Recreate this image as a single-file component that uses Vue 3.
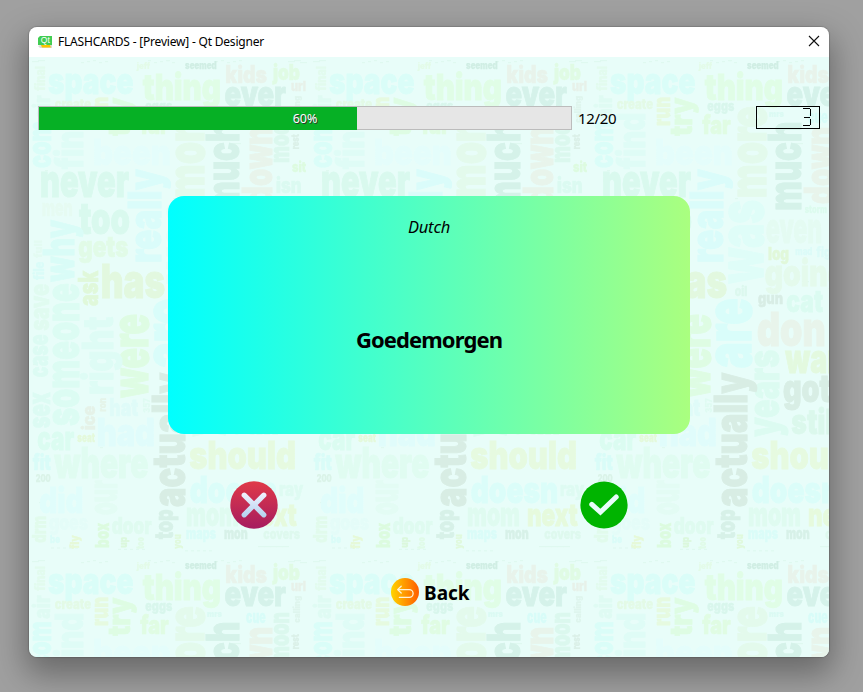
<script setup>
const TILE_W = 281
const TILE_H = 500

// [text, start x, end x, baseline y, font size, colour]
const across = [
  ['space', 19, 104.5, 36.5, 36, '#dafdf8'],
  ['thing', 113.7, 192, 43, 36, '#e0fde6'],
  ['seemed', 156, 187.5, 12, 10, '#d0eee4'],
  ['jeff', 107.7, 121, 12, 8, '#e3fbe8'],
  ['kids', 196.3, 238, 25.7, 24, '#e8f3eb'],
  ['ever', 195.5, 257, 49, 35, '#d5f2ea'],
  ['job', 244, 271, 23, 22, '#e0fbe4'],
  ['url', 262, 277, 34, 13, '#e7f1e9'],
  ['create', 25.7, 62, 52.3, 13, '#e3fae6'],
  ['eggs', 116.3, 143.3, 54, 13, '#d8f6ec'],
  ['mrs', 178, 193, 60, 9, '#dbfaf3'],
  ['cue', 217, 236.7, 65.7, 17, '#d8fcf8'],
  ['far', 111.3, 139.7, 77.3, 26, '#e0fce3'],
  ['been', 64, 142, 108, 35, '#e4fdfb'],
  ['sit', 263, 277, 114.7, 14, '#ddfbe0'],
  ['isn', 247, 272.7, 136.3, 21, '#dbfaf1'],
  ['never', 11, 100, 139.7, 45, '#d9f9ee'],
  ['storm', 213.7, 236, 156.3, 10, '#dcfbee'],
  ['men', 12.7, 43.7, 159, 24, '#e6fbf2'],
  ['too', 50, 101, 177.3, 44, '#d9f9ee'],
  ['even', 175, 231, 185.7, 42, '#e4fbf2'],
  ['gets', 49.3, 99.3, 200.3, 29, '#e1fbe7'],
  ['mad', 204.3, 221.3, 198.3, 10, '#dcfbf8'],
  ['fig', 225.3, 240, 200, 13, '#dcfbf8'],
  ['log', 177, 198, 203, 17, '#e1f8da'],
  ['going', 173.7, 255, 229, 36, '#e4faec'],
  ['oil', 143.7, 156.3, 239, 13, '#dcf8ee'],
  ['has', 71.7, 136, 240.7, 47, '#e2f8df'],
  ['gun', 167, 192, 247, 16, '#d8ede5'],
  ['cat', 195.3, 232, 254.7, 30, '#dbfbf1'],
  ['don', 166, 234.7, 288.7, 47, '#e8f4eb'],
  ['want', 194.3, 266, 316.3, 41, '#e3f9df'],
  ['got', 192, 240, 345.3, 38, '#d8eee5'],
  ['hat', 80.3, 109.3, 359, 24, '#dffbf8'],
  ['still', 200.3, 250, 377, 34, '#dbf8ec'],
  ['seat', 48.3, 66, 385, 12, '#e4f9db'],
  ['had', 67.7, 126, 389, 38, '#e0fcfb'],
  ['car', 8.3, 45.3, 393, 33, '#dbfcf1'],
  ['should', 160.3, 267, 411.7, 38, '#e6fae0'],
  ['fit', 3.7, 22, 413, 22, '#d9fcf8'],
  ['where', 25.3, 119.3, 420.7, 42, '#e0fcf1'],
  ['200', 6.7, 21.7, 425, 10, '#daf3e8'],
  ['ray', 250, 274.3, 439.3, 19, '#defbf2'],
  ['doesn', 160.7, 248.3, 446, 37, '#dbfdf9'],
  ['did', 10.3, 54.3, 455.7, 35, '#e0fdfb'],
  ['goes', 20, 59, 473.3, 22, '#e4fcf8'],
  ['mom', 157, 210, 469, 33, '#dffbf0'],
  ['next', 217, 267.7, 469, 31, '#e6fadd'],
  ['door', 82.7, 122.7, 477.3, 23, '#dffbf0'],
  ['maps', 157, 187, 481.7, 15, '#dafcf8'],
  ['mon', 195, 218.7, 481.7, 16, '#d7f1e8'],
  ['covers', 234.3, 271, 481.7, 14, '#def9ee'],
  ['be', 21, 31, 485.7, 11, '#dafcf8'],
]

// [text, baseline x, top y, bottom y, font size, colour]
const upward = [
  ['final', 16, 9, 33.7, 13, '#e2fbee'],
  ['air', 20.5, 38.3, 61.7, 24, '#dffbf3'],
  ['com', 22, 64, 111, 33, '#dafdf8'],
  ['run', 79.3, 39.7, 69, 24, '#e6fae0'],
  ['try', 101, 40.7, 79, 31, '#defce3'],
  ['find', 54.3, 55.7, 112.3, 38, '#dffcf6'],
  ['more', 175.3, 49, 141, 51, '#e3faec'],
  ['much', 209.7, 64.7, 153.7, 45, '#d5f2e9'],
  ['down', 242.7, 69.7, 147, 41, '#e8f4eb'],
  ['moon', 260, 55, 106, 27, '#dbf8ee'],
  ['calling', 271, 39, 65.7, 9, '#def5ed'],
  ['rest', 270, 77.3, 92.3, 11, '#dbf0e8'],
  ['really', 131.7, 112, 206, 45, '#dafcfa'],
  ['why', 45, 163, 224.7, 42, '#d9fcf7'],
  ['was', 171.5, 143, 226.3, 62, '#dffdf8'],
  ['full', 13, 183, 201, 11, '#e3fbf2'],
  ['file', 15, 204.7, 223, 14, '#dafcf8'],
  ['save', 20.3, 227, 273.7, 27, '#e0fbf0'],
  ['ask', 68.7, 213.7, 249, 27, '#e0f8da'],
  ['someone', 49.7, 226.3, 369, 47, '#dcfcf3'],
  ['are', 159.7, 241.3, 311.3, 63, '#d9fdfa'],
  ['case', 19, 277.3, 320.3, 27, '#dcfbf3'],
  ['were', 118.7, 257, 340.7, 50, '#defce3'],
  ['right', 84, 259.7, 338, 42, '#defcf5'],
  ['years', 188, 293, 379.7, 44, '#dcfbf1'],
  ['ice', 66, 348.7, 373, 18, '#e5f2e8'],
  ['ron', 77, 340.7, 354.7, 11, '#e5f4e9'],
  ['357', 121, 341.3, 355.7, 9, '#dffbf2'],
  ['sex', 21, 335.3, 371.3, 30, '#dcfbf3'],
  ['actually', 155.5, 315.7, 450, 46, '#d8ede4'],
  ['top', 143.7, 452.3, 482.3, 26, '#d7f1e8'],
  ['our', 87.7, 423, 458, 40, '#e3fcf4'],
  ['drm', 16.7, 459, 485.7, 19, '#e1fbec'],
  ['box', 80, 465.7, 491, 19, '#dcfbdf'],
  ['fly', 50, 478.3, 491.7, 12, '#e6f9d8'],
  ['up', 98, 480, 490.7, 11, '#dbf8dc'],
  ['too', 115, 480, 491.7, 11, '#e0fbe8'],
  ['you', 152, 477.3, 491.7, 11, '#e0f9dc'],
]

const specks = Array.from({ length: 54 }, (_, i) => ({
  x: (i * 67 + 9) % 274,
  y: i < 20 ? 3 + (i % 3) : i < 40 ? 489 + (i % 4) * 1.4 : (i * 83) % 470,
  w: i % 4 === 0 ? 7 : 3,
}))

const heft = (size) => size * 0.025

const total = 20
const current = 12
const percent = (current / total) * 100
</script>

<template>
  <div class="desktop">
    <main class="window">
      <header class="titlebar">
        <svg class="app-icon" width="14" height="12" viewBox="0 0 14 12">
          <path d="M2 0H14V9H0V2Z" fill="#41cd52" />
          <path d="M0 10L2 9H14V12H2Z" fill="#dcdcd4" />
          <path d="M3 9H12L13 11.5H4Z" fill="#f8c500" />
          <text x="2.8" y="7.4" class="app-icon-text">Qt</text>
        </svg>
        <span class="title">FLASHCARDS - [Preview] - Qt Designer</span>
        <svg class="close" width="12" height="12" viewBox="0 0 12 12">
          <path d="M1 1L11 11M11 1L1 11" />
        </svg>
      </header>

      <section class="client">
        <svg class="wallpaper" width="800" height="600" aria-hidden="true">
          <defs>
            <pattern id="words" :width="TILE_W" :height="TILE_H" patternUnits="userSpaceOnUse">
              <rect v-for="(s, i) in specks" :key="'s' + i" :x="s.x" :y="s.y" :width="s.w" height="1.2" fill="#dff9f0" />
              <text
                v-for="([t, x0, x1, y, size, c], i) in across"
                :key="'a' + i"
                :x="x0"
                :y="y"
                :font-size="size"
                :fill="c"
                :stroke="c"
                :stroke-width="heft(size)"
                :textLength="x1 - x0"
                lengthAdjust="spacingAndGlyphs"
              >{{ t }}</text>
              <text
                v-for="([t, x, y0, y1, size, c], i) in upward"
                :key="'u' + i"
                :transform="`translate(${x} ${y1}) rotate(-90)`"
                :font-size="size"
                :fill="c"
                :stroke="c"
                :stroke-width="heft(size)"
                :textLength="y1 - y0"
                lengthAdjust="spacingAndGlyphs"
              >{{ t }}</text>
            </pattern>
          </defs>
          <rect width="800" height="600" fill="url(#words)" />
        </svg>

        <div class="content">
          <div class="status">
            <div class="progress">
              <div class="fill" :style="{ width: `calc(${percent}% - 1px)` }"></div>
              <span class="percent">{{ percent }}%</span>
            </div>
            <span class="count">{{ current }}/{{ total }}</span>
            <div class="lcd">
              <svg width="9" height="18" viewBox="0 0 9 18">
                <path d="M0 .5H7M1 9.5H7M0 17.5H7M7.5 1V8M7.5 11V17" />
              </svg>
            </div>
          </div>

          <article class="card">
            <span class="language">Dutch</span>
            <strong class="word">Goedemorgen</strong>
          </article>

          <div class="answers">
            <button class="round" aria-label="Wrong">
              <svg width="48" height="48" viewBox="0 0 48 48">
                <defs>
                  <linearGradient id="red" x1="0" y1="0" x2="0" y2="1">
                    <stop offset="0" stop-color="#e03a48" />
                    <stop offset="1" stop-color="#a61c60" />
                  </linearGradient>
                  <linearGradient id="ice" gradientUnits="userSpaceOnUse" x1="0" y1="12" x2="0" y2="36">
                    <stop offset="0" stop-color="#f0f2fc" />
                    <stop offset="1" stop-color="#b4d2f0" />
                  </linearGradient>
                </defs>
                <circle cx="24" cy="24" r="23.7" fill="url(#red)" />
                <path d="M14.2 14.2L33.8 33.8M33.8 14.2L14.2 33.8" stroke="url(#ice)" stroke-width="5.2" stroke-linecap="round" />
              </svg>
            </button>
            <button class="round" aria-label="Right">
              <svg width="48" height="48" viewBox="0 0 48 48">
                <circle cx="24" cy="24" r="23.6" fill="#00b400" />
                <path d="M11.8 23.4L20.4 31.2L36.2 16" fill="none" stroke="#e8fdf9" stroke-width="5" stroke-linecap="round" stroke-linejoin="miter" />
              </svg>
            </button>
          </div>

          <button class="back">
            <svg width="28" height="28" viewBox="0 0 28 28">
              <defs>
                <linearGradient id="orange" x1="0" y1="0" x2="1" y2="0">
                  <stop offset="0" stop-color="#ffd400" />
                  <stop offset="1" stop-color="#ff5c00" />
                </linearGradient>
              </defs>
              <circle cx="14" cy="14" r="14" fill="url(#orange)" />
              <path d="M10.2 8.2L6.6 11.6L10.2 15M6.8 11.6H18.2A3.9 3.9 0 0 1 18.2 19.4H8.4" fill="none" stroke="#fff3d8" stroke-width="1.3" stroke-linecap="round" stroke-linejoin="round" />
            </svg>
            <span class="back-label">Back</span>
          </button>
        </div>
      </section>
    </main>
  </div>
</template>

<style>
body {
  background: #a0a0a0;
}
</style>

<style scoped>
.desktop {
  box-sizing: border-box;
  width: 863px;
  height: 692px;
  padding: 27px 34px 35px 29px;
  overflow: hidden;
  background: #a0a0a0;
  font-family: "Noto Sans", "Open Sans", sans-serif;
  color: #000;
}
.window {
  width: 800px;
  height: 630px;
  border-radius: 8px;
  box-shadow: 0 0 1px 1px rgba(0, 0, 0, 0.14), 0 14px 32px 4px rgba(0, 0, 0, 0.34);
}
.titlebar {
  display: flex;
  align-items: center;
  box-sizing: border-box;
  height: 30px;
  padding: 0 9px;
  border-radius: 8px 8px 0 0;
  background: #fff;
}
.app-icon-text {
  font: 400 8.5px "Liberation Sans", sans-serif;
  fill: #fff;
}
.title {
  margin-left: 6px;
  font-size: 12px;
  line-height: 30px;
  letter-spacing: -0.2px;
  white-space: nowrap;
}
.close {
  margin: -2px 0 0 auto;
  stroke: #111;
  stroke-width: 1.1;
}
.client {
  display: grid;
  height: 600px;
  overflow: hidden;
  border-radius: 0 0 8px 8px;
  background: #e8fdf9;
}
.wallpaper,
.content {
  grid-area: 1 / 1;
}
.wallpaper text {
  font-family: Inter, sans-serif;
  font-weight: 900;
}
.content {
  z-index: 1;
  display: flex;
  flex-direction: column;
  align-items: flex-start;
}
.status {
  display: flex;
  align-items: center;
  box-sizing: border-box;
  width: 800px;
  height: 24px;
  margin-top: 49px;
  padding: 0 9px;
}
.progress {
  display: grid;
  box-sizing: border-box;
  width: 534px;
  height: 24px;
  border: 1px solid #bcbcbc;
  background: #e6e6e6;
}
.fill,
.percent {
  grid-area: 1 / 1;
}
.fill {
  background: #06b025;
}
.percent {
  font-size: 12.5px;
  line-height: 23px;
  text-align: center;
  color: #fff;
  text-shadow: 1px 1px 0 #333;
}
.count {
  margin-left: 6px;
  font-size: 15px;
  line-height: 24px;
  letter-spacing: -0.35px;
}
.lcd {
  display: flex;
  justify-content: flex-end;
  box-sizing: border-box;
  width: 64px;
  height: 23px;
  margin: -1px 0 0 auto;
  padding: 1px 7px 0 0;
  border: 1px solid #000;
}
.lcd path {
  fill: none;
  stroke: #000;
}
.card {
  display: flex;
  flex-direction: column;
  align-items: center;
  width: 522px;
  height: 238px;
  margin: 66px 0 0 139px;
  border-radius: 16px;
  background: linear-gradient(90deg, #00ffff, #aaff7f);
}
.language {
  margin-top: 19px;
  font-size: 16.5px;
  font-style: italic;
  line-height: 24px;
  letter-spacing: -0.2px;
}
.word {
  margin-top: 85px;
  font-size: 22px;
  line-height: 30px;
  letter-spacing: -0.9px;
}
.answers {
  display: flex;
  gap: 302px;
  margin: 47px 0 0 201px;
}
button {
  padding: 0;
  border: 0;
  background: none;
  font: inherit;
  color: inherit;
}
.round,
.round svg {
  display: block;
  width: 48px;
  height: 48px;
}
.back {
  display: flex;
  align-items: center;
  gap: 5px;
  margin: 49px 0 0 362px;
  font-size: 19px;
  font-weight: 700;
  line-height: 28px;
}
.back-label {
  margin-top: 2px;
  line-height: 26px;
}
</style>
